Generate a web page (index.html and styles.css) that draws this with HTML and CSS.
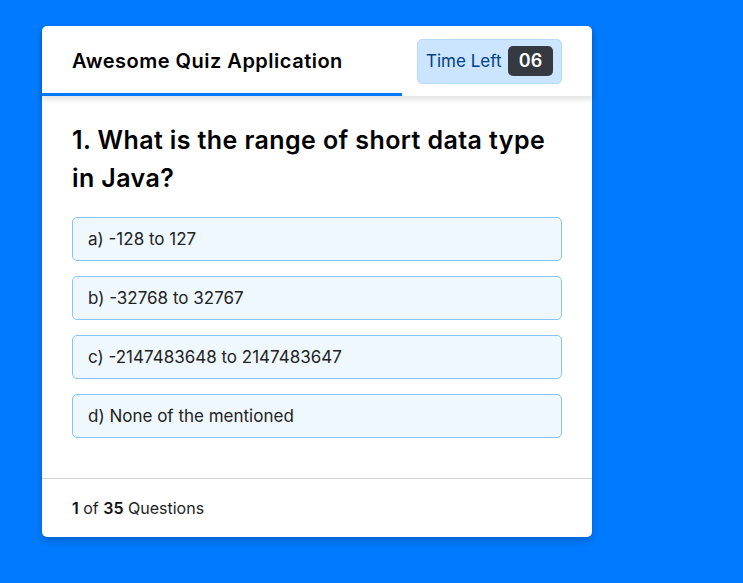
FILE: index.html
```html
<!DOCTYPE html>
<html lang="en">
<head>
<meta charset="utf-8">
<title>Awesome Quiz Application</title>
<link rel="stylesheet" href="styles.css">
</head>
<body>
<div class="quiz-box">
  <header class="quiz-header">
    <div class="title">Awesome Quiz Application</div>
    <div class="timer">
      <span class="time-text">Time Left</span>
      <span class="timer-sec">06</span>
    </div>
    <div class="time-line"></div>
  </header>
  <section class="quiz-body">
    <div class="que-text">1. What is the range of short data type in Java?</div>
    <div class="option-list">
      <div class="option">a) -128 to 127</div>
      <div class="option">b) -32768 to 32767</div>
      <div class="option">c) -2147483648 to 2147483647</div>
      <div class="option">d) None of the mentioned</div>
    </div>
  </section>
  <footer class="quiz-footer">
    <div class="total"><b>1</b> of <b>35</b> Questions</div>
  </footer>
</div>
</body>
</html>
```
FILE: styles.css
```css
* { box-sizing: border-box; }
html, body { margin: 0; padding: 0; }
body {
  background: #007bff;
  font-family: "Inter", "Noto Sans", sans-serif;
  min-height: 583px;
  padding: 26px 0 0 42px;
}
.quiz-box {
  width: 550px;
  background: #fff;
  border-radius: 5px;
  box-shadow: 0 4px 8px rgba(0, 0, 0, 0.2);
}
.quiz-header {
  position: relative;
  height: 70px;
  padding: 0 30px;
  display: flex;
  align-items: center;
  justify-content: space-between;
  box-shadow: 0 3px 5px 1px rgba(0, 0, 0, 0.1);
  border-radius: 5px 5px 0 0;
}
.title {
  font-size: 20px;
  font-weight: 600;
  letter-spacing: 0.5px;
  color: #000;
}
.timer {
  height: 45px;
  width: 145px;
  padding: 0 8px;
  display: flex;
  align-items: center;
  justify-content: space-between;
  background: #cce5ff;
  border: 1px solid #b8daff;
  border-radius: 5px;
}
.time-text {
  font-size: 17px;
  font-weight: 400;
  color: #004085;
}
.timer-sec {
  width: 45px;
  height: 30px;
  line-height: 30px;
  text-align: center;
  font-size: 18px;
  font-weight: 600;
  color: #fff;
  background: #343a40;
  border-radius: 5px;
}
.time-line {
  position: absolute;
  left: 0;
  bottom: 0;
  height: 3px;
  width: 360px;
  background: #007bff;
}
.quiz-body {
  padding: 26px 30px 20px 30px;
}
.que-text {
  font-size: 25px;
  font-weight: 600;
  line-height: 1.5;
  letter-spacing: 0.4px;
  color: #000;
}
.option-list {
  padding: 20px 0;
  display: flex;
  flex-direction: column;
  gap: 15px;
}
.option {
  height: 44px;
  display: flex;
  align-items: center;
  padding: 0 15px;
  font-size: 17px;
  color: #222;
  background: aliceblue;
  border: 1px solid #84c5fe;
  border-radius: 5px;
}
.quiz-footer {
  height: 59px;
  padding: 0 30px 1px 30px;
  display: flex;
  align-items: center;
  border-top: 1px solid lightgrey;
}
.total {
  font-size: 16px;
  color: #222;
}
.total b { font-weight: 600; color: #111; }
```
